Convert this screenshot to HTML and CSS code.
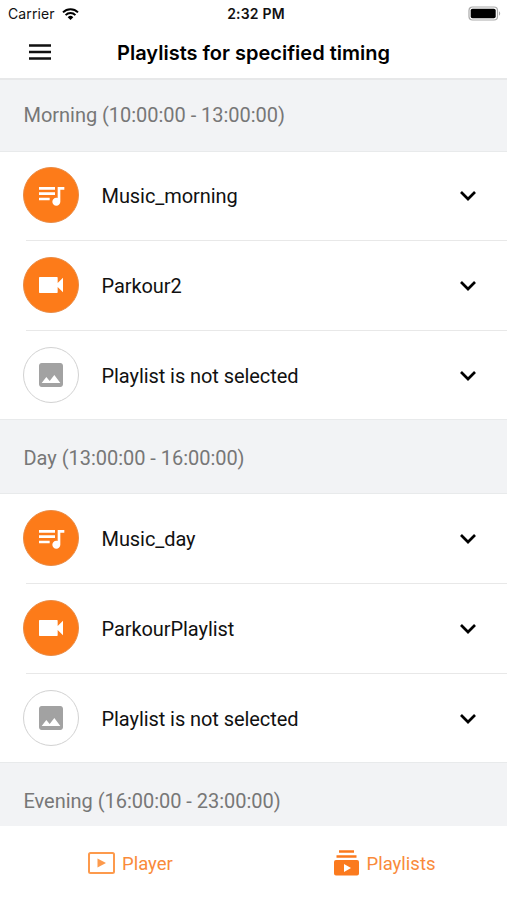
FILE: index.html
```html
<!DOCTYPE html>
<html lang="en">
<head>
    <meta charset="UTF-8">
    <title>Playlists for specified timing</title>
    <link rel="stylesheet" href="styles.css">
</head>
<body>

<!-- Shared icons -->
<svg class="icon-defs" width="0" height="0">
    <symbol id="icon-music" viewBox="0 0 24 24">
        <path d="M15 6H3v2h12V6zm0 4H3v2h12v-2zM3 16h8v-2H3v2zM17 6v8.180c-.31-.11-.65-.18-1-.18-1.660 0-3 1.340-3 3s1.340 3 3 3 3-1.340 3-3V8h3V6h-5z"/>
    </symbol>
    <symbol id="icon-video" viewBox="0 0 24 24">
        <path d="M17 10.500V6.500Q17 6 16.500 6H3.500Q3 6 3 6.500v11q0 .5.500.5h13q.5 0 .5-.5v-4l4 4v-11z"/>
    </symbol>
    <symbol id="icon-image" viewBox="0 0 24 24">
        <path d="M21 19V5c0-1.100-.9-2-2-2H5c-1.100 0-2 .9-2 2v14c0 1.100.9 2 2 2h14c1.100 0 2-.9 2-2zM8.500 13.500l2.500 3.010L14.500 12l4.500 6H5l3.500-4.500z"/>
    </symbol>
    <symbol id="icon-chevron" viewBox="0 0 18 12">
        <path d="M2 2l7 7 7-7" fill="none" stroke="#000" stroke-width="2.700"/>
    </symbol>
</svg>

<div class="app">
    <div class="status-bar">
        <div class="carrier">
            <span>Carrier</span>
            <svg class="wifi" viewBox="0 0 17 12">
                <path d="M1 4.400a10.700 10.700 0 0 1 15 0M3.600 7.100a7 7 0 0 1 9.800 0" fill="none" stroke="#000" stroke-width="2"/>
                <path d="M8.500 12L5.700 9.200a4 4 0 0 1 5.600 0z"/>
            </svg>
        </div>
        <span class="time">2:32 PM</span>
        <svg class="battery" viewBox="0 0 33 15">
            <rect x="1" y="1" width="28.500" height="13" rx="3.500" fill="none" stroke="#aaa" stroke-width="1.200"/>
            <rect x="2.700" y="2.700" width="25" height="9.600" rx="1.800"/>
            <path d="M31 5.300c1.600.8 1.600 3.600 0 4.400z" fill="#aaa"/>
        </svg>
    </div>

    <div class="header">
        <svg class="menu" viewBox="0 0 22 16">
            <path d="M0 1.500h22M0 8h22M0 14.500h22" stroke="#111" stroke-width="2.500"/>
        </svg>
        <h1>Playlists for specified timing</h1>
    </div>

    <div class="content">
        <!-- Morning -->
        <div class="section first">Morning (10:00:00 - 13:00:00)</div>
        <div class="row">
            <div class="avatar"><svg><use href="#icon-music"/></svg></div>
            <span class="name">Music_morning</span>
            <svg class="chevron"><use href="#icon-chevron"/></svg>
        </div>
        <div class="row">
            <div class="avatar"><svg><use href="#icon-video"/></svg></div>
            <span class="name">Parkour2</span>
            <svg class="chevron"><use href="#icon-chevron"/></svg>
        </div>
        <div class="row last">
            <div class="avatar empty"><svg><use href="#icon-image"/></svg></div>
            <span class="name">Playlist is not selected</span>
            <svg class="chevron"><use href="#icon-chevron"/></svg>
        </div>

        <!-- Day -->
        <div class="section">Day (13:00:00 - 16:00:00)</div>
        <div class="row">
            <div class="avatar"><svg><use href="#icon-music"/></svg></div>
            <span class="name">Music_day</span>
            <svg class="chevron"><use href="#icon-chevron"/></svg>
        </div>
        <div class="row">
            <div class="avatar"><svg><use href="#icon-video"/></svg></div>
            <span class="name">ParkourPlaylist</span>
            <svg class="chevron"><use href="#icon-chevron"/></svg>
        </div>
        <div class="row last">
            <div class="avatar empty"><svg><use href="#icon-image"/></svg></div>
            <span class="name">Playlist is not selected</span>
            <svg class="chevron"><use href="#icon-chevron"/></svg>
        </div>

        <!-- Evening -->
        <div class="section">Evening (16:00:00 - 23:00:00)</div>
    </div>

    <div class="tabs">
        <div class="tab player">
            <svg width="27" height="22" viewBox="0 0 27 22">
                <rect x="1" y="1" width="25" height="20" rx="1.500" fill="none" stroke="#fd9a4c" stroke-width="2"/>
                <path d="M9.500 6.500v9l8.500-4.500z" fill="#fd9a4c"/>
            </svg>
            <span>Player</span>
        </div>
        <div class="tab playlists">
            <svg width="25" height="26" viewBox="0 0 25 26">
                <path d="M5 1.500h15M2.500 6.500h20" stroke="#fb7a1e" stroke-width="2.400"/>
                <path fill-rule="evenodd" d="M2 10h21a2 2 0 0 1 2 2v11.500a2 2 0 0 1-2 2H2a2 2 0 0 1-2-2V12a2 2 0 0 1 2-2zm8 4v8l7-4z" fill="#fb7a1e"/>
            </svg>
            <span>Playlists</span>
        </div>
    </div>
</div>

</body>
</html>
```
FILE: styles.css
```css
* {
    box-sizing: border-box;
}
body {
    margin: 0;
    font-family: Roboto, sans-serif;
    background-color: #fff;
    color: #111;
}
.icon-defs {
    display: block;
}
.app {
    display: flex;
    flex-direction: column;
    height: 900px;
    overflow: hidden;
}

/* Status bar */
.status-bar {
    display: grid;
    grid-template-columns: 1fr auto 1fr;
    align-items: center;
    height: 27px;
    padding: 0 6px 0 8px;
    font-family: Inter, sans-serif;
    font-size: 14px;
}
.carrier {
    display: flex;
    align-items: center;
    gap: 7px;
    letter-spacing: 0.1px;
}
.wifi {
    width: 17px;
    height: 12px;
}
.time {
    margin-left: 3px;
    font-size: 14px;
    font-weight: 600;
    letter-spacing: 0.2px;
}
.battery {
    justify-self: end;
    width: 33px;
    height: 15px;
}

/* Header */
.header {
    display: grid;
    grid-template-columns: 1fr auto 1fr;
    align-items: center;
    height: 53px;
    padding: 0 0 2px 29px;
    border-bottom: 2px solid #e7e8e9;
}
.menu {
    width: 22px;
    height: 16px;
}
.header h1 {
    margin: 2px 29px 0 0;
    font-family: Inter, sans-serif;
    font-size: 20px;
    font-weight: 600;
    color: #000;
    white-space: nowrap;
}

/* Playlist sections */
.content {
    flex: 1;
    overflow: hidden;
}
.section {
    display: flex;
    align-items: center;
    height: 75px;
    padding: 3px 23px 0 23.5px;
    background-color: #f2f3f5;
    border-top: 1px solid #e8eaeb;
    border-bottom: 1px solid #e8eaeb;
    font-size: 20px;
    letter-spacing: -0.03px;
    color: #777;
}
.section.first {
    height: 72px;
    padding-top: 0;
    padding-bottom: 1px;
    border-top: none;
}
.row {
    display: flex;
    align-items: center;
    height: 90px;
    padding: 0 30px 2px 23px;
    background: linear-gradient(#e8e8e8, #e8e8e8) 26px 100% / 100% 1px no-repeat;
}
.section.first + .row {
    height: 89px;
    padding-bottom: 3px;
}
.row.last {
    height: 88px;
    padding-bottom: 0;
    background: none;
}
.avatar {
    display: flex;
    align-items: center;
    justify-content: center;
    width: 56px;
    height: 56px;
    border-radius: 50%;
    background-color: #fd7b19;
    border: 1px solid #e98b45;
    fill: #fff;
}
.avatar svg {
    width: 32px;
    height: 32px;
}
.avatar.empty {
    background-color: #fff;
    border-color: #d2d2d2;
    fill: #a2a2a2;
}
.name {
    flex: 1;
    margin-left: 22.5px;
    padding-top: 1px;
    font-size: 20px;
    letter-spacing: -0.07px;
}
.chevron {
    width: 18px;
    height: 12px;
    margin-top: 2px;
}

/* Bottom tabs */
.tabs {
    display: flex;
    height: 74px;
}
.tab {
    display: flex;
    flex: 0 0 50%;
    align-items: center;
    font-size: 18.5px;
    color: #f98a3a;
}
.tab span {
    padding-top: 2px;
}
.player {
    gap: 7px;
    padding-left: 88px;
}
.playlists {
    gap: 8px;
    padding-left: 80px;
}
```
